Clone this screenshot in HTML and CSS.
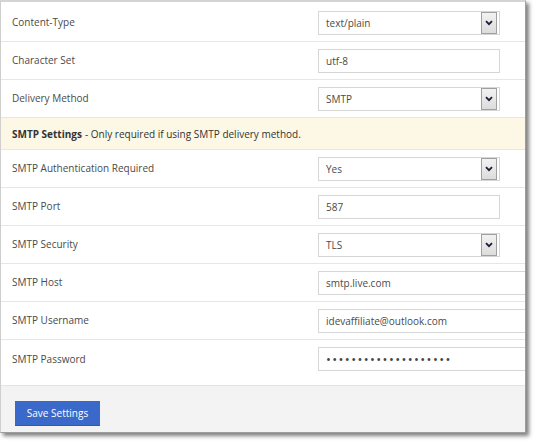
FILE: index.html
```html
<!DOCTYPE html>
<html>
<head>
<meta charset="utf-8">
<link rel="stylesheet" href="styles.css">
</head>
<body>
<div class="panel">
  <div class="row first">
    <div class="label">Content-Type</div>
    <div class="field select"><span>text/plain</span><span class="arrow"><svg width="8" height="6" viewBox="0 0 8 6"><path d="M1 1.2 L4 4.2 L7 1.2" fill="none" stroke="#1b1b3a" stroke-width="1.8"/></svg></span></div>
  </div>
  <div class="row">
    <div class="label">Character Set</div>
    <div class="field"><span>utf-8</span></div>
  </div>
  <div class="row">
    <div class="label">Delivery Method</div>
    <div class="field select"><span>SMTP</span><span class="arrow"><svg width="8" height="6" viewBox="0 0 8 6"><path d="M1 1.2 L4 4.2 L7 1.2" fill="none" stroke="#1b1b3a" stroke-width="1.8"/></svg></span></div>
  </div>
  <div class="notice"><b>SMTP Settings</b> - Only required if using SMTP delivery method.</div>
  <div class="row">
    <div class="label">SMTP Authentication Required</div>
    <div class="field select"><span>Yes</span><span class="arrow"><svg width="8" height="6" viewBox="0 0 8 6"><path d="M1 1.2 L4 4.2 L7 1.2" fill="none" stroke="#1b1b3a" stroke-width="1.8"/></svg></span></div>
  </div>
  <div class="row">
    <div class="label">SMTP Port</div>
    <div class="field"><span>587</span></div>
  </div>
  <div class="row">
    <div class="label">SMTP Security</div>
    <div class="field select"><span>TLS</span><span class="arrow"><svg width="8" height="6" viewBox="0 0 8 6"><path d="M1 1.2 L4 4.2 L7 1.2" fill="none" stroke="#1b1b3a" stroke-width="1.8"/></svg></span></div>
  </div>
  <div class="row">
    <div class="label">SMTP Host</div>
    <div class="field wide"><span>smtp.live.com</span></div>
  </div>
  <div class="row">
    <div class="label">SMTP Username</div>
    <div class="field wide"><span>idevaffiliate@outlook.com</span></div>
  </div>
  <div class="row last">
    <div class="label">SMTP Password</div>
    <div class="field wide"><span class="dots">••••••••••••••••••••</span></div>
  </div>
  <div class="footer">
    <div class="btn">Save Settings</div>
  </div>
</div>
</body>
</html>
```
FILE: styles.css
```css
html, body {
  margin: 0;
  padding: 0;
  background: #ffffff;
}
body {
  width: 537px;
  height: 441px;
  overflow: hidden;
  font-family: "Open Sans", "DejaVu Sans", sans-serif;
  font-size: 10px;
  color: #4a4a4a;
}
.panel {
  width: 524px;
  height: 430px;
  border-top: 2px solid #d4d4d4;
  border-left: 1px solid #cfcfcf;
  border-right: 1px solid #9d9d9d;
  border-bottom: 1px solid #9d9d9d;
  box-shadow: 3px 3px 4px rgba(0, 0, 0, 0.5);
  overflow: hidden;
  display: flex;
  flex-direction: column;
  background: #fff;
}
.row {
  height: 37px;
  border-bottom: 1px solid #e6e6e6;
  display: flex;
  align-items: center;
  flex-shrink: 0;
}
.row.first {
  height: 37px;
  padding-top: 2px;
}
.row.last {
  height: 45px;
  border-bottom: 1px solid #e4e4e4;
  align-items: flex-start;
}
.row.last .label {
  margin-top: 12px;
}
.row.last .field {
  margin-top: 7px;
}
.label {
  width: 306px;
  padding-left: 11px;
  flex-shrink: 0;
  line-height: 15px;
}
.field {
  width: 173px;
  height: 22px;
  border: 1px solid #d6d6d6;
  display: flex;
  align-items: center;
  justify-content: space-between;
  padding-left: 7px;
  box-sizing: content-box;
  color: #4a4a4a;
  flex-shrink: 0;
}
.field.select {
  width: 171px;
  padding-right: 2px;
}
.field.wide {
  width: 230px;
}
.arrow {
  height: 22px;
  border: 1px solid #a0a0a0;
  background: linear-gradient(#f2f2f2, #dcdcdc);
  display: flex;
  align-items: center;
  justify-content: center;
  box-sizing: border-box;
  width: 16px;
}
.arrow svg {
  display: block;
}
.dots {
  font-size: 13px;
  letter-spacing: 1.4px;
  color: #444;
}
.notice {
  height: 31px;
  background: #fcf8e5;
  border-bottom: 1px solid #ede8d5;
  display: flex;
  align-items: center;
  padding-left: 11px;
  color: #333;
  flex-shrink: 0;
}
.notice b {
  font-weight: 700;
  margin-right: 3px;
}
.footer {
  flex: 1;
  background: #f3f3f3;
  padding: 15px 0 0 14px;
}
.btn {
  display: inline-block;
  width: 85px;
  height: 25px;
  line-height: 25px;
  text-align: center;
  background: #3b69c9;
  color: #fff;
  border-bottom: 1px solid #2f58b0;
  box-sizing: border-box;
}
```
